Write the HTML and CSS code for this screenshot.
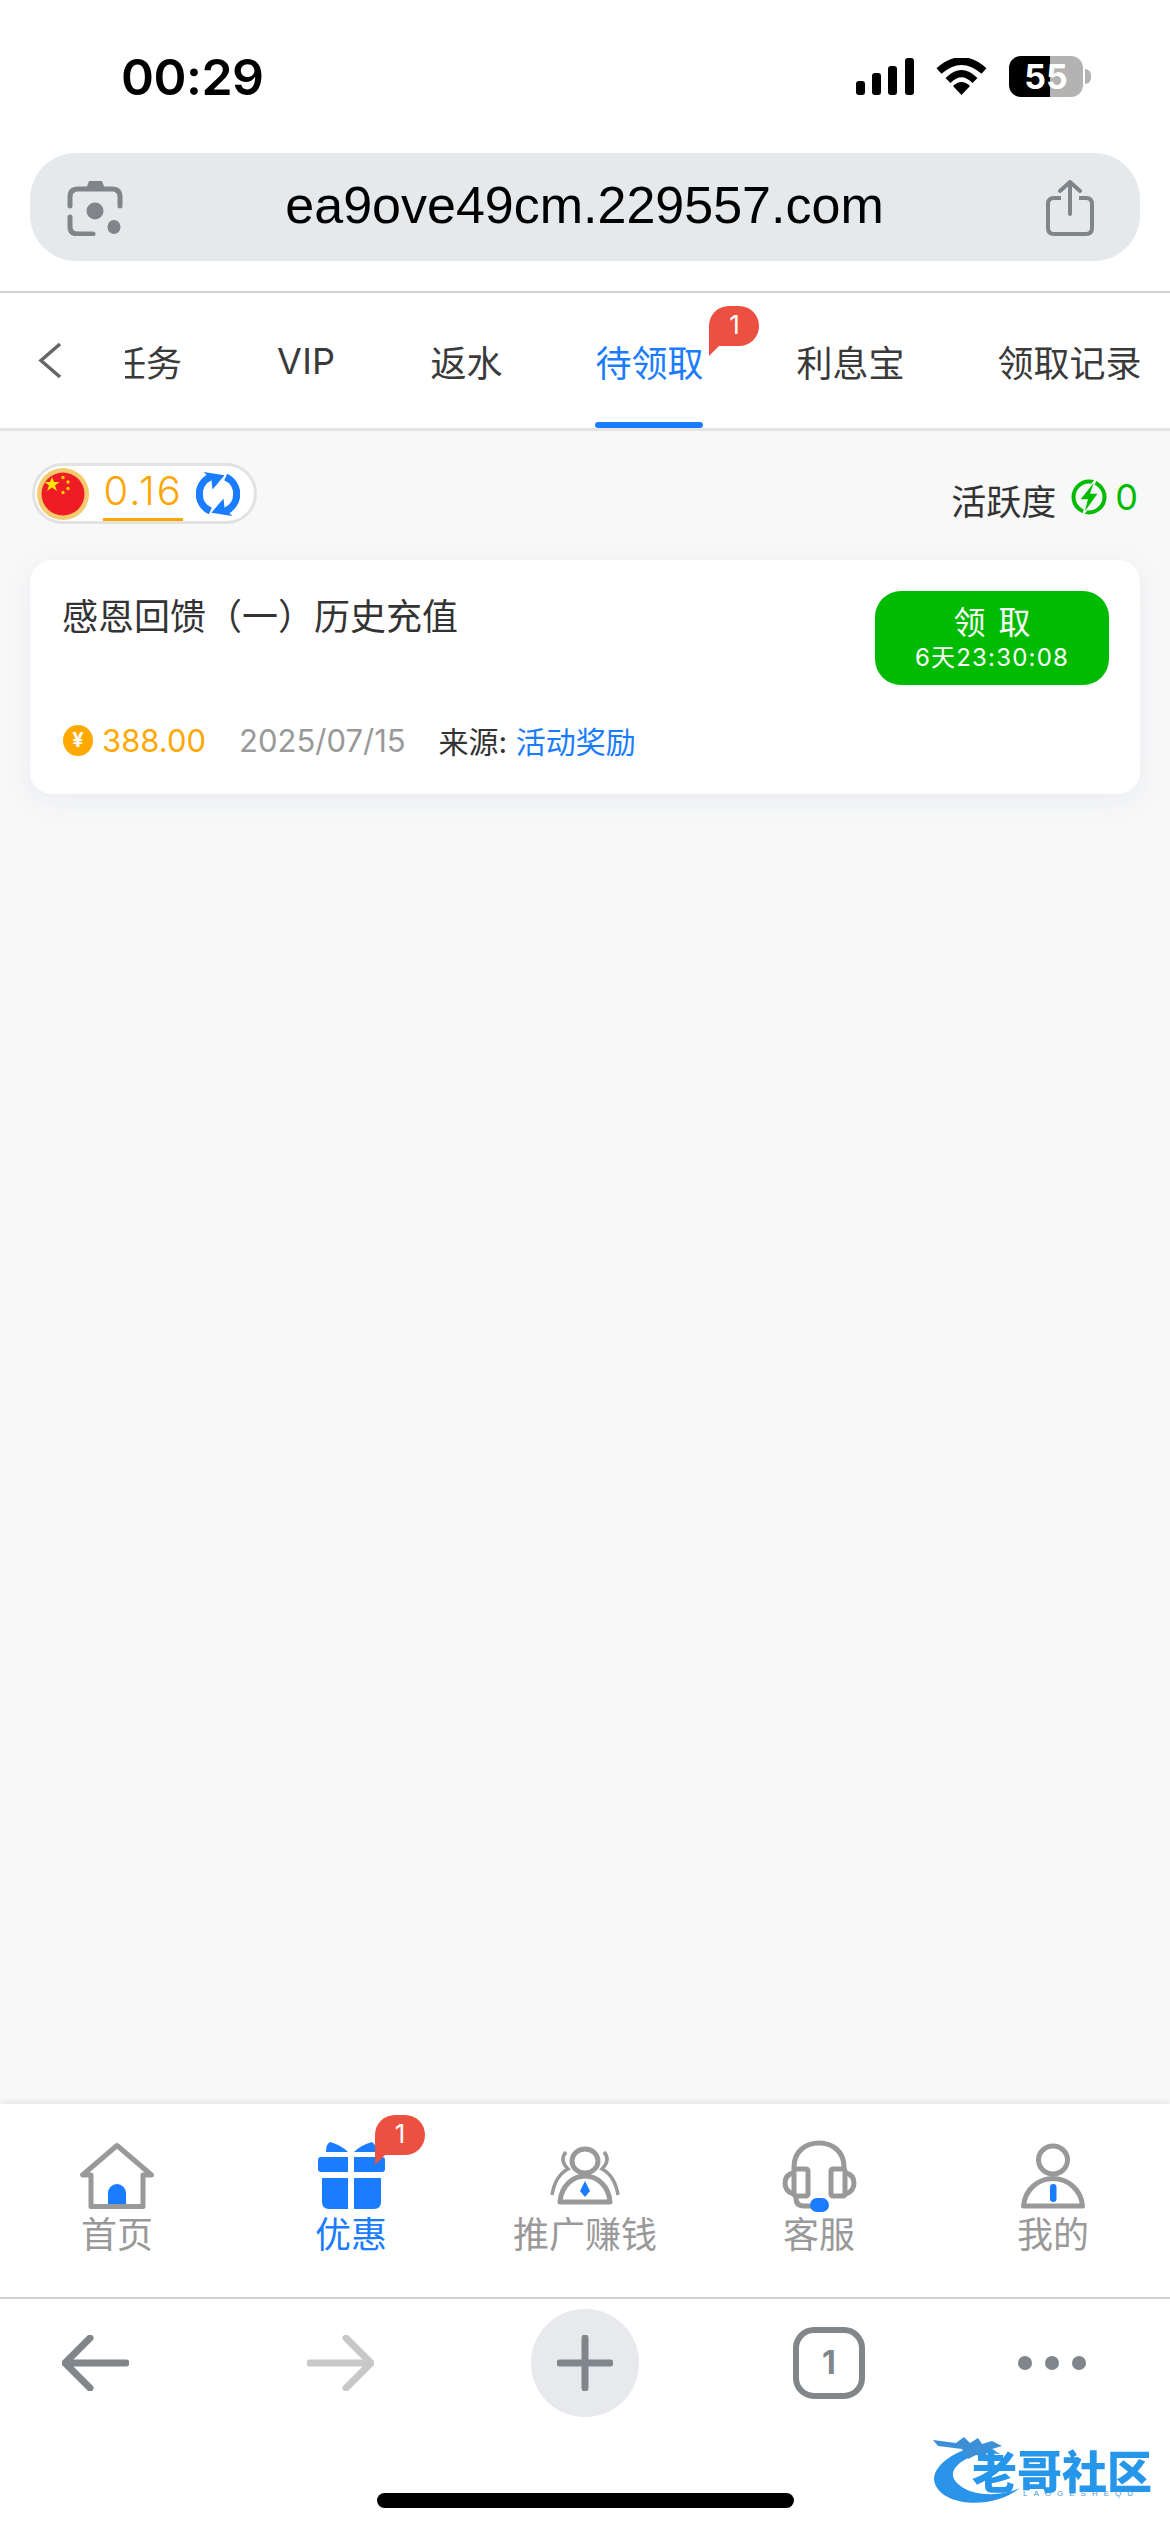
FILE: index.html
```html
<!DOCTYPE html>
<html lang="zh">
<head>
<meta charset="utf-8">
<title>待领取</title>
<link rel="stylesheet" href="styles.css">
</head>
<body>
<div class="phone">
  <header class="browser-top">
    <div class="status">
      <span class="time">00:29</span>
      <div class="status-icons">
        <svg class="signal" width="58" height="37" viewBox="0 0 58 37"><rect x="0" y="23" width="9" height="14" rx="3"/><rect x="16" y="15" width="9" height="22" rx="3"/><rect x="32" y="8" width="9" height="29" rx="3"/><rect x="49" y="0" width="9" height="37" rx="3"/></svg>
        <svg class="wifi" width="51" height="37" viewBox="0 0 51 37"><path d="M3 13 Q25.500 -7 48 13" fill="none" stroke="#000" stroke-width="7.500"/><path d="M12 22.500 Q25.500 9 39 22.500" fill="none" stroke="#000" stroke-width="7"/><path d="M17 28 Q25.500 20 34 28 L25.500 37 Z"/></svg>
        <div class="battery">55</div>
      </div>
    </div>
    <div class="url-wrap">
      <div class="urlbar">
        <svg class="lens" width="56" height="56" viewBox="0 0 56 56"><path d="M19 9 L22 1 H35 L38 9 Z" fill="#7f8689"/><path d="M3 26 V17 Q3 9 11 9 H45 Q53 9 53 17 V26 M3 37 V47 Q3 54 11 54 H26" fill="none" stroke="#7f8689" stroke-width="5" stroke-linecap="round"/><circle cx="28" cy="31" r="8.500" fill="#7f8689"/><ellipse cx="47" cy="47" rx="6.500" ry="7" fill="#7f8689"/></svg>
        <span class="url">ea9ove49cm.229557.com</span>
        <svg class="share" width="48" height="56" viewBox="0 0 48 56"><path d="M15 18 H8 Q2 18 2 24 V48 Q2 54 8 54 H40 Q46 54 46 48 V24 Q46 18 40 18 H33" fill="none" stroke="#7f8689" stroke-width="4"/><path d="M24 34 V2 M14 11 L24 2 L34 11" fill="none" stroke="#7f8689" stroke-width="4" stroke-linecap="round" stroke-linejoin="round"/></svg>
      </div>
    </div>
  </header>

  <nav class="tabbar">
    <div class="back">
      <svg width="24" height="37" viewBox="0 0 24 37"><path d="M22 2 L3 18.500 L22 35" fill="none" stroke="#666" stroke-width="3.500"/></svg>
    </div>
    <div class="tab-window">
      <div class="tab-track">
        <div class="tab">任务</div>
        <div class="tab tab-vip">VIP</div>
        <div class="tab">返水</div>
        <div class="tab tab-active">待领取<span class="badge badge-tab">1</span></div>
        <div class="tab">利息宝</div>
        <div class="tab">领取记录</div>
      </div>
    </div>
  </nav>

  <main class="content">
    <div class="summary">
      <div class="wallet">
        <svg class="flag" width="52" height="52" viewBox="0 0 52 52">
          <circle cx="26" cy="26" r="26" fill="#f3ca6e"/>
          <circle cx="26" cy="26" r="21.500" fill="#ee1c25"/>
          <polygon fill="#ffe600" points="15,9 17,14 22.500,14 18,17.500 20,23 15,19.500 10,23 12,17.500 7.500,14 13,14"/>
          <circle cx="26" cy="9.500" r="1.700" fill="#ffd200"/><circle cx="31" cy="14" r="1.700" fill="#ffd200"/><circle cx="31" cy="20.500" r="1.700" fill="#ffd200"/><circle cx="26" cy="24.500" r="1.700" fill="#ffd200"/>
        </svg>
        <span class="amount">0.16</span>
        <svg class="refresh" width="44" height="44" viewBox="2 2 40 40">
          <g fill="none" stroke="#1a7cff" stroke-width="6.500"><path d="M15 6.500 A17 17 0 0 0 15 37.500"/><path d="M29 37.500 A17 17 0 0 0 29 6.500"/></g>
          <path fill="#1a7cff" d="M9 2 L28 5 L17 18 L16 9 Z M35 42 L16 39 L27 26 L28 35 Z"/>
        </svg>
      </div>
      <div class="activity">
        <span>活跃度</span>
        <svg class="bolt" width="36" height="38" viewBox="0 0 36 38"><circle cx="18" cy="19" r="15.500" fill="none" stroke="#00bb00" stroke-width="4"/><path d="M25 1 L8 22 H16 L12 37 L28 15 H20 Z" fill="#00bb00" stroke="#f8f8f8" stroke-width="1.500"/></svg>
        <span class="activity-num">0</span>
      </div>
    </div>

    <article class="card">
      <div class="card-top">
        <h2 class="card-title">感恩回馈（一）历史充值</h2>
        <button class="claim">
          <span class="claim-label">领 取</span>
          <span class="claim-time">6天23:30:08</span>
        </button>
      </div>
      <div class="card-meta">
        <span class="coin">¥</span>
        <span class="money">388.00</span>
        <span class="date">2025/07/15</span>
        <span class="source">来源: <span class="source-link">活动奖励</span></span>
      </div>
    </article>
  </main>

  <nav class="appnav">
    <div class="nav-item">
      <svg width="80" height="72" viewBox="0 0 80 72"><path d="M31 68 V53 a9 9 0 0 1 18 0 V68 Z" fill="#1a7cff"/><path d="M40 5.500 L5.500 35 H14 V66.500 H66 V35 H74.500 Z" fill="none" stroke="#999" stroke-width="5" stroke-linejoin="round"/></svg>
      <span class="nav-label">首页</span>
    </div>
    <div class="nav-item nav-active">
      <svg width="80" height="72" viewBox="0 0 80 72"><g fill="#1a7cff"><path d="M15 12 Q15 4 19 2 Q30 5 37 12 Z M65 12 Q65 4 61 2 Q50 5 43 12 Z"/><path d="M10 17 H37 V32 H10 Q7 32 7 29 V20 Q7 17 10 17 Z M43 17 H71 Q74 17 74 20 V29 Q74 32 71 32 H43 Z"/><path d="M11 38 H37 V69 H18 Q11 69 11 62 Z M43 38 H70 V62 Q70 69 63 69 H43 Z"/></g></svg>
      <span class="nav-label">优惠</span>
      <span class="badge badge-nav">1</span>
    </div>
    <div class="nav-item">
      <svg width="80" height="72" viewBox="0 0 80 72"><g fill="none" stroke="#999" stroke-width="5" stroke-linejoin="round"><ellipse cx="40" cy="21" rx="13" ry="12"/><path d="M15 62 C16 46 28 36 40 36 C52 36 64 46 65 62 Z"/></g><g fill="none" stroke="#999" stroke-width="3.500"><path d="M21 12 Q14 20 23 29 Q10 36 7 55"/><path d="M59 12 Q66 20 57 29 Q70 36 73 55"/></g><path d="M40 41 L45 51 L40 57 L35 51 Z" fill="#1a7cff"/></svg>
      <span class="nav-label">推广赚钱</span>
    </div>
    <div class="nav-item">
      <svg width="80" height="72" viewBox="0 0 80 72"><g fill="none" stroke="#999" stroke-width="5" stroke-linejoin="round"><path d="M15 30 V27 C15 11 27 3 40 3 C53 3 65 11 65 27 V30"/><rect x="15" y="29" width="14" height="27" rx="2"/><rect x="52" y="29" width="14" height="27" rx="2"/><path d="M14 33 Q6 35 6 43 Q6 51 14 54 M67 33 Q75 35 75 43 Q75 51 67 54"/><path d="M17 56 V58 Q17 66 25 66 H33"/></g><rect x="31" y="58" width="19" height="14" rx="7" fill="#1a7cff"/></svg>
      <span class="nav-label">客服</span>
    </div>
    <div class="nav-item">
      <svg width="80" height="72" viewBox="0 0 80 72"><g fill="none" stroke="#999" stroke-width="5" stroke-linejoin="round"><ellipse cx="40" cy="20" rx="14.500" ry="14"/><path d="M10.500 66 C12 48 27 38.500 40 38.500 C53 38.500 68 48 69.500 66 Z"/></g><rect x="37" y="44" width="6.500" height="18" rx="3.200" fill="#1a7cff"/></svg>
      <span class="nav-label">我的</span>
    </div>
  </nav>

  <footer class="toolbar">
    <div class="tools">
      <svg width="67" height="56" viewBox="0 0 67 56"><path d="M28 3 L3 28 L28 53 M4 28 H64" fill="none" stroke="#80868a" stroke-width="7" stroke-linecap="round" stroke-linejoin="round"/></svg>
      <svg width="67" height="56" viewBox="0 0 67 56"><path d="M39 3 L64 28 L39 53 M3 28 H63" fill="none" stroke="#c8c8c8" stroke-width="7" stroke-linecap="round" stroke-linejoin="round"/></svg>
      <div class="plus-circle">
        <svg width="56" height="56" viewBox="0 0 56 56"><path d="M28 3 V53 M3 28 H53" fill="none" stroke="#80868a" stroke-width="7" stroke-linecap="round"/></svg>
      </div>
      <div class="tab-count">1</div>
      <div class="dots"><i></i><i></i><i></i></div>
    </div>
    <div class="home-indicator"></div>
    <div class="logo">
      <svg class="dragon" width="100" height="73" viewBox="0 0 100 73">
        <path fill="#2a93ea" d="M44 14 C14 22 -4 40 4 54 C14 74 60 78 88 56 C66 66 36 64 24 50 C14 38 30 26 52 20 Z"/>
        <path fill="#3b8fd6" d="M1 8 L24 11 L32 5 L38 11 L46 6 L50 12 L60 9 L70 14 L60 17 L68 22 L54 21 L56 26 L44 23 L36 27 L30 17 L14 15 L6 14 Z"/>
      </svg>
      <span class="logo-name">老哥社区</span>
      <span class="logo-sub">LAOGESHEQU</span>
    </div>
  </footer>
</div>
</body>
</html>
```
FILE: styles.css
```css
* { box-sizing: border-box; }
html, body { margin: 0; padding: 0; }
body {
  font-family: Inter, "Noto Sans CJK SC", sans-serif;
  background: #fff;
  color: #333;
}
.phone {
  width: 1170px;
  height: 2532px;
  display: flex;
  flex-direction: column;
  overflow: hidden;
}

/* browser chrome */
.browser-top { background: #fff; }
.status {
  height: 153px;
  display: flex;
  align-items: center;
  justify-content: space-between;
  padding: 0 87px 0 121px;
}
.time { font-size: 50px; font-weight: 600; color: #000; letter-spacing: -0.5px; }
.status-icons { display: flex; align-items: center; gap: 22px; }
.battery {
  position: relative;
  width: 74px;
  height: 41px;
  border-radius: 12px;
  background: linear-gradient(90deg, #000 55.500%, #b3b3b3 55.500%);
  color: #fff;
  font-size: 34px;
  font-weight: 700;
  line-height: 41px;
  text-align: center;
}
.battery::after {
  content: "";
  position: absolute;
  left: 76px;
  top: 13px;
  width: 6px;
  height: 15px;
  border-radius: 0 8px 8px 0;
  background: #b3b3b3;
}
.url-wrap {
  padding: 0 30px 30px;
  border-bottom: 2px solid #d2d2d2;
}
.urlbar {
  height: 108px;
  border-radius: 46px;
  background: #e6e9ec;
  display: flex;
  align-items: center;
  justify-content: space-between;
  padding: 0 46px 0 37px;
}
.url { font-size: 52px; color: #000; font-family: "Liberation Sans", sans-serif; margin-top: -4px; }
.lens { margin-top: 2px; }
.share { margin-top: 2px; }

/* tabs */
.tabbar {
  height: 138px;
  display: flex;
  background: #fff;
  border-bottom: 3px solid #e4e4e4;
}
.back {
  width: 125px;
  padding-left: 38px;
  display: flex;
  align-items: center;
}
.tab-window { flex: 1; overflow: hidden; }
.tab-track {
  height: 135px;
  display: flex;
  gap: 93px;
  margin-left: -15px;
}
.tab {
  position: relative;
  display: flex;
  align-items: center;
  font-size: 36px;
  color: #3a3a3a;
  white-space: nowrap;
}
.tab-vip { margin: 0 2px 0 2px; letter-spacing: 0.300px; }
.tab-active { color: #1a7cff; }
.tab-active::after {
  content: "";
  position: absolute;
  left: 0;
  right: 0;
  bottom: 0;
  height: 6px;
  border-radius: 3px;
  background: #1a7cff;
}
.badge {
  position: absolute;
  width: 50px;
  height: 40px;
  border-radius: 20px 20px 20px 0;
  background: #eb5040;
  color: #fff;
  font-size: 26px;
  line-height: 38px;
  text-align: center;
}
.badge::after {
  content: "";
  position: absolute;
  left: 0;
  top: 39px;
  border-top: 11px solid #eb5040;
  border-right: 11px solid transparent;
}
.badge-tab { left: 114px; top: 13px; }
.badge-nav { left: calc(50% + 24px); top: 11px; }

/* content */
.content {
  flex: 1;
  background: #f8f8f8;
  padding: 32px 30px 0;
}
.summary {
  display: flex;
  justify-content: space-between;
  align-items: flex-end;
}
.wallet {
  height: 61px;
  width: 225px;
  margin-left: 2px;
  display: flex;
  align-items: center;
  border: 3px solid #e2e2e2;
  border-radius: 31px;
  background: #fff;
  padding-left: 2px;
}
.amount {
  margin-left: 14px;
  padding: 0 0 0 0.500px;
  height: 55px;
  font-size: 40px;
  font-weight: 300;
  letter-spacing: 2px;
  line-height: 50px;
  color: #ffa500;
  border-bottom: 3px solid #ffa500;
}
.refresh { margin-left: 13px; }
.activity {
  display: flex;
  align-items: center;
  height: 48px;
  padding: 0 2px 2px 0;
  font-size: 35px;
  color: #333;
}
.bolt { margin-left: 15px; margin-top: -4px; }
.activity-num { margin-left: 8px; color: #00bb00; font-size: 36px; margin-top: -4px; }

.card {
  margin-top: 36px;
  height: 234px;
  background: #fff;
  border-radius: 22px;
  padding: 31px 31px 0 32px;
  box-shadow: 0 6px 24px rgba(200, 208, 230, 0.3);
}
.card-top {
  display: flex;
  justify-content: space-between;
  align-items: flex-start;
}
.card-title {
  margin: 1px 0 0;
  font-size: 36px;
  font-weight: 400;
  line-height: 50px;
  color: #333;
}
.claim {
  width: 234px;
  height: 94px;
  border: 0;
  padding: 0;
  border-radius: 26px;
  background: #00bb00;
  color: #fff;
  display: flex;
  flex-direction: column;
  align-items: center;
  justify-content: center;
  font-family: inherit;
}
.claim-label { font-size: 32px; line-height: 40px; word-spacing: 4px; }
.claim-time { font-size: 24px; line-height: 30px; letter-spacing: 1.200px; }
.card-meta {
  margin-top: 35px;
  padding-left: 1px;
  height: 40px;
  display: flex;
  align-items: center;
}
.coin {
  width: 30px;
  height: 31px;
  border-radius: 50%;
  background: #ffa800;
  color: #fff;
  font-size: 20px;
  font-weight: 700;
  line-height: 31px;
  text-align: center;
}
.money { margin-left: 9px; font-size: 31px; color: #ffa800; }
.date { margin-left: 33px; font-size: 31px; color: #999; }
.source { margin-left: 33px; font-size: 30px; color: #333; white-space: nowrap; }
.source-link { color: #1a7cff; }

/* bottom nav */
.appnav {
  height: 195px;
  display: grid;
  grid-template-columns: repeat(5, 234px);
  background: #fff;
  border-bottom: 2px solid #d2d2d2;
  box-shadow: 0 -2px 6px rgba(0, 0, 0, 0.08);
  position: relative;
}
.nav-item {
  position: relative;
  display: flex;
  flex-direction: column;
  align-items: center;
  padding-top: 36px;
}
.nav-label { font-size: 36px; line-height: 46px; color: #999; }
.nav-active .nav-label { color: #1a7cff; }

/* browser toolbar */
.toolbar {
  position: relative;
  height: 233px;
  background: #fff;
}
.tools {
  height: 128px;
  display: grid;
  grid-template-columns: 245px 224px 262px 225px auto;
  align-items: center;
  justify-items: start;
  padding-left: 62px;
}
.plus-circle {
  width: 108px;
  height: 108px;
  border-radius: 50%;
  background: #e8e9ed;
  display: flex;
  align-items: center;
  justify-content: center;
}
.tab-count {
  width: 72px;
  height: 72px;
  border: 6px solid #80868a;
  border-radius: 21px;
  color: #80868a;
  font-size: 32px;
  font-weight: 700;
  line-height: 60px;
  text-align: center;
}
.dots { display: flex; gap: 13px; }
.dots i { width: 14px; height: 14px; border-radius: 50%; background: #80868a; }
.home-indicator {
  position: absolute;
  left: 377px;
  top: 194px;
  width: 417px;
  height: 15px;
  border-radius: 8px;
  background: #000;
}
.logo {
  position: absolute;
  left: 932px;
  top: 133px;
  width: 222px;
  height: 73px;
}
.dragon { position: absolute; left: 0; top: 0; filter: blur(0.7px); }
.logo-name {
  position: absolute;
  left: 40px;
  top: 24px;
  font-size: 45px;
  font-weight: 900;
  line-height: 33px;
  white-space: nowrap;
  color: #2596ea;
  filter: blur(0.6px);
}
.logo-sub {
  position: absolute;
  left: 91px;
  top: 58px;
  font-family: "Liberation Sans", sans-serif;
  font-size: 8px;
  line-height: 8px;
  letter-spacing: 6px;
  color: #4a9ad8;
  white-space: nowrap;
}
```
